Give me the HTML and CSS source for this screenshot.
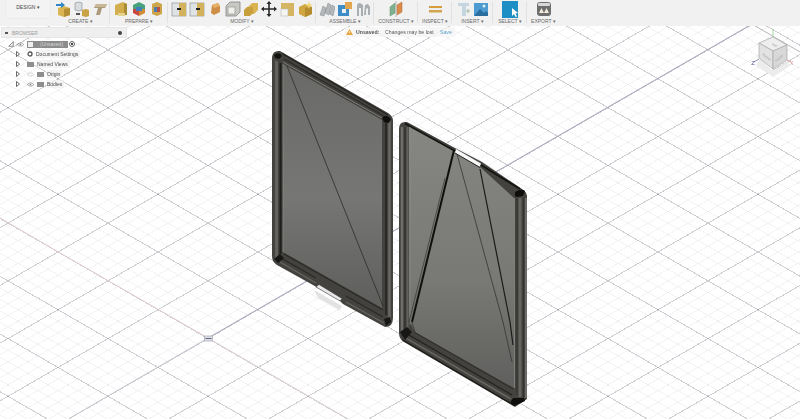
FILE: index.html
```html
<!DOCTYPE html>
<html lang="en">
<head>
<meta charset="utf-8">
<title>Fusion 360 - Design</title>
<link rel="stylesheet" href="styles.css">
</head>
<body>
<div class="app">
  <div class="grid grid-a"></div>
  <div class="grid grid-b"></div>
  <svg class="canvas" width="800" height="419" viewBox="0 0 800 419">
    <defs>
      <linearGradient id="faceL" x1="0" y1="0" x2="0" y2="1">
        <stop offset="0" stop-color="#696967"/><stop offset=".55" stop-color="#767674"/><stop offset="1" stop-color="#5e5e5c"/>
      </linearGradient>
      <linearGradient id="faceR" x1="0" y1="0" x2="0" y2="1">
        <stop offset="0" stop-color="#868683"/><stop offset=".6" stop-color="#787875"/><stop offset="1" stop-color="#5f5f5d"/>
      </linearGradient>
    </defs>
    <path d="M208 338L55 250L-10 212" stroke="#e3cfcf" stroke-width="1" fill="none"/>
    <path d="M208 338L752 24" stroke="#a9a9bd" stroke-width="1" fill="none"/>
    <path d="M752 24L800 52" stroke="#b5b5bb" stroke-width="1" fill="none"/>
    <path d="M208 338L350 420" stroke="#e0d4d6" stroke-width="1" fill="none"/>
    <path d="M208 338L70 418" stroke="#c9c9d2" stroke-width="1" fill="none"/>
    <rect x="204.500" y="336" width="8" height="5" fill="#dedee6" stroke="#a8a8b4" stroke-width=".7"/>
    <path d="M205.500 338.500H211.500" stroke="#666a80" stroke-width="1"/>

    <!-- shadow under the left panel notch -->
    <path d="M314 290L342 306L340 310L318 298Z" fill="#e2e2e2"/>

    <!-- left panel -->
    <path d="M272 57Q273 50 280 51L388 113Q393 116 393 121V318Q393 327 385 327L343 304L338 299L318 288L313 285L277 265Q272 262 272 256Z" fill="#43423e"/>
    <path d="M283 64L382 120V308L283 252Z" fill="url(#faceL)"/>
    <path d="M275 60V258L278 256V62Z" fill="#62615d"/>
    <path d="M283 64V252" stroke="#8f8f8b" stroke-width=".6"/>
    <path d="M280.500 63V254" stroke="#1d1d1b" stroke-width="2"/>
    <path d="M386 122V315" stroke="#232321" stroke-width="1.600"/>
    <path d="M389.500 121V320" stroke="#6a6965" stroke-width="2.500"/>
    <path d="M283 62L382 118" stroke="#7d7c78" stroke-width="1"/>
    <path d="M284 59L384 116" stroke="#2b2a27" stroke-width="1.200"/>
    <path d="M282 53.500L388 115" stroke="#232220" stroke-width="1.200"/>
    <path d="M284 254L383 310" stroke="#2a2926" stroke-width="1.100"/>
    <path d="M281 258L316 278M346 296L383 317" stroke="#2a2926" stroke-width="1.100"/>
    <path d="M280 262L316 283M346 302L384 323" stroke="#66655f" stroke-width="1.300"/>
    <path d="M274 55Q279 51 282 56L279 59L275 58Z" fill="#111110"/>
    <path d="M382 118Q386 113 391 119L389 123L384 122Z" fill="#0f0f0e"/>
    <path d="M274 259L280 254L284 258L278 263Z" fill="#171716"/>
    <path d="M384 319L390 317L391 322L386 326Z" fill="#171716"/>
    <path d="M287 66L383 306" stroke="#2c2c2a" stroke-width=".8" fill="none"/>
    <path d="M316 287L319 284.500L342 298.500L340 301Z" fill="#e8e8e8" stroke="#3a3a38" stroke-width=".6"/>

    <!-- right panel -->
    <path d="M399 129Q399 121 407 122L455 148L482 162L522 189Q527 192 527 197V399L515 407L404 342Q399 339 399 333Z" fill="#43423e"/>
    <path d="M409 125L455 151L480 167L514 198V388L415 332L409 320Z" fill="url(#faceR)"/>
    <path d="M456 149L481 163.500L479.500 167L455 153Z" fill="#f7f7f7"/>
    <path d="M455 153L480 167.500" stroke="#232220" stroke-width="1"/>
    <path d="M405 123.500L455 151M481 165L520 189" stroke="#141412" stroke-width="1.800"/>
    <path d="M402 127V333" stroke="#6f6e6a" stroke-width="2.500"/>
    <path d="M405 127V332" stroke="#2e2e2b" stroke-width="1.100"/>
    <path d="M407.500 127V328" stroke="#62615d" stroke-width="2"/>
    <path d="M410 127V325" stroke="#8e8e89" stroke-width=".6"/>
    <path d="M514.500 198V388" stroke="#9a9a94" stroke-width=".7"/>
    <path d="M517 198V395" stroke="#333230" stroke-width="1"/>
    <path d="M520 198V397" stroke="#65645f" stroke-width="3"/>
    <path d="M523.500 198V400" stroke="#333230" stroke-width="1"/>
    <path d="M526 198V398" stroke="#73726d" stroke-width="1.800"/>
    <path d="M515 192Q521 188 525 191L523 196L517 197L515 196Z" fill="#0e0e0d"/>
    <path d="M414 332L513 389" stroke="#2c2b27" stroke-width="1"/>
    <path d="M409 335L512 395" stroke="#22211e" stroke-width="1.200"/>
    <path d="M406 338L511 399" stroke="#6b6a65" stroke-width="1.400"/>
    <path d="M402 339.500L510 403" stroke="#1c1b19" stroke-width="1.300"/>
    <path d="M400 332L407 327L412 332L405 340Z" fill="#171716"/>
    <path d="M513 398L524 398L525 401L514 406L510 403Z" fill="#0f0f0e"/>
    <path d="M454 150L412 322" stroke="#0f0f0e" stroke-width="2"/>
    <path d="M445 178L409 322" stroke="#333331" stroke-width=".7"/>
    <path d="M412 322L415 332" stroke="#333331" stroke-width=".7"/>
    <path d="M457 154L503 322L512 362" stroke="#353533" stroke-width=".8" fill="none"/>
    <path d="M480 169L510 322L513 345" stroke="#1a1a19" stroke-width="1.200" fill="none"/>

    <!-- view cube -->
    <path d="M760 59L773 71L788 61L790 66L773 77L756 65Z" fill="#ececec"/>
    <path d="M773 37V29" stroke="#a7d6a7" stroke-width="1"/>
    <path d="M759 59L754 62" stroke="#8d8db8" stroke-width="1"/>
    <path d="M787 60L791 62" stroke="#e2a3a3" stroke-width="1"/>
    <path d="M773 37L787 45L773 51L759 43Z" fill="#eeeeee" stroke="#a8a8a8" stroke-width=".7"/>
    <path d="M759 43L773 51V69L759 58Z" fill="#e2e2e2" stroke="#a8a8a8" stroke-width=".7"/>
    <path d="M787 45L773 51V69L787 60Z" fill="#d8d8d8" stroke="#a8a8a8" stroke-width=".7"/>
    <text x="774" y="46" class="cube-t" transform="rotate(25 774 46)">TOP</text>
    <text x="766" y="58" class="cube-t" transform="rotate(38 766 58)">FRONT</text>
    <text x="780" y="59" class="cube-t" transform="rotate(-38 780 59)">RIGHT</text>
    <text x="755" y="65" class="axis-z">Z</text>
    <text x="790" y="65" class="axis-x">X</text>
  </svg>

  <header class="toolbar">
    <button class="design">DESIGN ▾</button>
    <div class="grp g-create">
      <div class="icons">
        <svg class="ic" viewBox="0 0 16 16"><path d="M3 7L9 5L15 7V14L9 16L3 14Z" fill="#d9b554"/><path d="M9 8V16L15 14V7Z" fill="#b48f35"/><path d="M1 3H6V1L10 4L6 7V5H1Z" fill="#2f86c4"/></svg>
        <svg class="ic" viewBox="0 0 16 16"><path d="M2 2Q6 0 9 2V9Q6 11 2 9Z" fill="#d8dcdf" stroke="#8f979b" stroke-width=".7"/><path d="M9 9L13 8L16 9V15L13 16L9 15Z" fill="#c9a345"/><path d="M3 12H7V14H3Z" fill="#555"/></svg>
        <svg class="ic" viewBox="0 0 16 16"><path d="M5 3H16L14 7H11L9 14H5L7 7H3Z" fill="#ab9a7b"/><path d="M5 3H16L14 6H4Z" fill="#c8b896"/></svg>
      </div>
      <span class="lbl">CREATE ▾</span>
    </div>
    <div class="grp g-prep">
      <div class="icons">
        <svg class="ic" viewBox="0 0 16 16"><path d="M2 4L10 1L14 3V14H2Z" fill="#d2ae4c"/><path d="M11 2L14 3V14H11Z" fill="#a98a35"/><path d="M5 12H12V15H5Z" fill="#e6d28f"/></svg>
        <svg class="ic" viewBox="0 0 16 16"><path d="M2 4L8 1L14 4V8H2Z" fill="#4aa27d"/><path d="M2 8H8V15L2 12Z" fill="#c9473f"/><path d="M8 8H14V12L8 15Z" fill="#d38a35"/><path d="M5 6H11V10H5Z" fill="#3d80bd"/></svg>
        <svg class="ic" viewBox="0 0 16 16"><path d="M3 3L8 1L13 3V13L8 15L3 13Z" fill="#cda64a"/><path d="M5 6H11V11H5Z" fill="#b9534a"/><path d="M5 6H8V11H5Z" fill="#4a7fb0"/></svg>
      </div>
      <span class="lbl">PREPARE ▾</span>
    </div>
    <div class="grp g-mod">
      <div class="icons">
        <svg class="ic" viewBox="0 0 16 16"><rect x="1" y="2" width="14" height="13" fill="#dfe3e6" stroke="#8e9498" stroke-width=".7"/><rect x="8" y="2" width="7" height="13" fill="#d2b25c"/><rect x="6" y="7" width="4" height="2" fill="#222"/></svg>
        <svg class="ic" viewBox="0 0 16 16"><rect x="1" y="2" width="14" height="13" fill="#dfe3e6" stroke="#8e9498" stroke-width=".7"/><rect x="8" y="2" width="7" height="13" fill="#d2b25c"/><rect x="7" y="7" width="4" height="2" fill="#222"/></svg>
        <svg class="ic" viewBox="0 0 16 16"><path d="M5 4L11 2L13 5V11L7 14L4 12Z" fill="#cf8e45"/><path d="M5 4L11 2L13 5L7 7Z" fill="#e6b268"/></svg>
        <svg class="ic" viewBox="0 0 16 16"><path d="M1 5L5 1H15V11L11 15H1Z" fill="#c8c8c4" stroke="#777" stroke-width=".7"/><rect x="3" y="6" width="7" height="7" fill="#f0f0ec" stroke="#8a8a86" stroke-width=".6"/></svg>
        <svg class="ic" viewBox="0 0 16 16"><path d="M5 6L9 2H15V9L11 13H5Z" fill="#d9b450"/><path d="M1 9L4 6H10V12L7 15H1Z" fill="#c79f3d"/></svg>
        <svg class="ic" viewBox="0 0 16 16"><path d="M8 1V15M1 8H15" stroke="#2a2a2a" stroke-width="1.600"/><path d="M8 0L5.500 3H10.500ZM8 16L5.500 13H10.500ZM0 8L3 5.500V10.500ZM16 8L13 5.500V10.500Z" fill="#2a2a2a"/></svg>
        <svg class="ic" viewBox="0 0 16 16"><rect x="2" y="2" width="13" height="13" fill="#d6b562"/><rect x="2" y="8" width="7" height="7" fill="#f5f5f2" stroke="#b9b9b5" stroke-width=".6"/></svg>
        <svg class="ic" viewBox="0 0 16 16"><path d="M2 6L8 3L15 6V13L8 16L2 13Z" fill="#cfa640"/><path d="M8 7V16L15 13V6Z" fill="#b58d30"/><path d="M12 0L13 3L16 4L13 5L12 8L11 5L8 4L11 3Z" fill="#f1d77a"/></svg>
      </div>
      <span class="lbl">MODIFY ▾</span>
    </div>
    <div class="grp g-asm">
      <div class="icons">
        <svg class="ic" viewBox="0 0 16 16"><path d="M1 14L4 5L7 7L5 15ZM6 12L9 2L12 4L10 14ZM11 13L13 4L16 6L14 15Z" fill="#b4b8ba" stroke="#7e8487" stroke-width=".5"/></svg>
        <svg class="ic" viewBox="0 0 16 16"><rect x="1" y="4" width="11" height="11" fill="#3f8dc7"/><rect x="8" y="1" width="7" height="7" fill="#e0a750"/><rect x="5" y="8" width="4" height="4" fill="#eaf2f7"/></svg>
        <svg class="ic" viewBox="0 0 16 16"><path d="M2 15V5Q2 2 5 2L8 4V15H6V7H4V15ZM9 14L10 4L13 3L15 6V14H13V7L11 8V14Z" fill="#a9aeb0"/></svg>
      </div>
      <span class="lbl">ASSEMBLE ▾</span>
    </div>
    <div class="grp g-con">
      <div class="icons">
        <svg class="ic" viewBox="0 0 16 16"><path d="M2 6L7 2V12L2 15Z" fill="#7fb28e" stroke="#5f8f6f" stroke-width=".5"/><path d="M9 4L14 1V11L9 14Z" fill="#d98b4a" stroke="#b66e33" stroke-width=".5"/><path d="M8 0V16" stroke="#999" stroke-width=".6"/></svg>
      </div>
      <span class="lbl">CONSTRUCT ▾</span>
    </div>
    <div class="grp g-ins">
      <div class="icons">
        <svg class="ic" viewBox="0 0 16 16"><rect x="2" y="5" width="13" height="2" fill="#d79c3e"/><rect x="2" y="7" width="13" height="2" fill="#eee"/><rect x="2" y="9" width="13" height="2.500" fill="#d2a650"/></svg>
      </div>
      <span class="lbl">INSPECT ▾</span>
    </div>
    <div class="grp g-insert">
      <div class="icons">
        <svg class="ic-s" viewBox="0 0 14 16"><path d="M1 2H12V5H9V15H5V5H1Z" fill="#c5d6e0"/><path d="M9 10H13M11 8V12" stroke="#a9c0a8" stroke-width="1.200"/></svg>
        <svg class="ic" viewBox="0 0 16 16"><rect x="1" y="2" width="14" height="13" fill="#4d9bd0"/><path d="M1 15L7 8L11 12L13 10L15 12V15Z" fill="#2a6d9f"/><circle cx="11" cy="5" r="1.500" fill="#d9edf8"/></svg>
      </div>
      <span class="lbl">INSERT ▾</span>
    </div>
    <div class="grp g-sel">
      <div class="icons">
        <svg class="ic-l" viewBox="0 0 16 17"><rect width="16" height="17" fill="#1d8fc4"/><path d="M10 7V15L12 13L13.500 16L15 15.500L13.500 12.500L16 12Z" fill="#fff"/></svg>
      </div>
      <span class="lbl">SELECT ▾</span>
    </div>
    <div class="grp g-exp">
      <div class="icons">
        <svg class="ic" viewBox="0 0 16 16"><rect x="1" y="1" width="14" height="14" rx="3" fill="#6e6e6e"/><rect x="2" y="2" width="12" height="3" rx="1" fill="#d8d8d8"/><path d="M3 12L5.500 7L8 12ZM8 12L10.500 7L13 12Z" fill="#f3eadb"/></svg>
      </div>
      <span class="lbl">EXPORT ▾</span>
    </div>
  </header>

  <aside class="browser">
    <div class="br-head"><span class="br-left"><i class="br-mark"></i>BROWSER</span><i class="br-dot"></i></div>
    <ul class="tree">
      <li class="row">
        <svg class="tw" viewBox="0 0 8 8"><path d="M1 7H7V1Z" fill="none" stroke="#555" stroke-width=".9"/></svg>
        <svg class="eye" viewBox="0 0 8 6"><path d="M0 3Q4 -1 8 3Q4 7 0 3Z" fill="none" stroke="#777" stroke-width=".7"/><circle cx="4" cy="3" r="1" fill="#777"/></svg>
        <span class="current"><i class="doc"></i><b>(Unsaved)</b></span>
        <i class="target"></i>
      </li>
      <li class="row sub"><svg class="tri" viewBox="0 0 4 6"><path d="M.5 .5L3.500 3L.5 5.500Z" fill="#fff" stroke="#444" stroke-width=".8"/></svg><svg class="gear" viewBox="0 0 6 6"><circle cx="3" cy="3" r="2" fill="none" stroke="#555" stroke-width="1.300"/></svg><span>Document Settings</span></li>
      <li class="row sub"><svg class="tri" viewBox="0 0 4 6"><path d="M.5 .5L3.500 3L.5 5.500Z" fill="#fff" stroke="#444" stroke-width=".8"/></svg><i class="folder"></i><span>Named Views</span></li>
      <li class="row sub"><svg class="tri" viewBox="0 0 4 6"><path d="M.5 .5L3.500 3L.5 5.500Z" fill="#fff" stroke="#444" stroke-width=".8"/></svg><svg class="eye pale" viewBox="0 0 8 6"><path d="M0 3Q4 -1 8 3Q4 7 0 3Z" fill="none" stroke="#aaa" stroke-width=".7"/></svg><i class="folder"></i><span>Origin</span></li>
      <li class="row sub"><svg class="tri" viewBox="0 0 4 6"><path d="M.5 .5L3.500 3L.5 5.500Z" fill="#fff" stroke="#444" stroke-width=".8"/></svg><svg class="eye" viewBox="0 0 8 6"><path d="M0 3Q4 -1 8 3Q4 7 0 3Z" fill="none" stroke="#777" stroke-width=".7"/><circle cx="4" cy="3" r="1" fill="#777"/></svg><i class="folder"></i><span>Bodies</span></li>
    </ul>
  </aside>

  <div class="unsaved">
    <svg class="warn" viewBox="0 0 8 7"><path d="M4 0L8 7H0Z" fill="#e8a33a"/><path d="M4 2.500V5" stroke="#fff" stroke-width=".8"/></svg>
    <b>Unsaved:</b>
    <span class="msg">Changes may be lost</span>
    <a class="save">Save</a>
  </div>
</div>
</body>
</html>
```

FILE: styles.css
```css
* { box-sizing: border-box; }
html, body { margin: 0; height: 100%; overflow: hidden; background: #fff; }
body { font-family: "Liberation Sans", Arial, sans-serif; }

.app {
  position: relative;
  width: 800px;
  height: 419px;
  overflow: hidden;
  background: #fff;
  filter: blur(0.4px);
}

/* The ground grid: two sets of lines, rotated about the model origin at (208, 338). */
.grid {
  position: absolute;
  left: -792px;
  top: -662.5px;
  width: 2000px;
  height: 2000px;
  background-image:
    repeating-linear-gradient(to bottom, #cfcfd3 0 1px, transparent 1px 50px),
    repeating-linear-gradient(to bottom, #f4f4f6 0 1px, transparent 1px 10px);
}
.grid-a { transform: rotate(30deg); }
.grid-b { transform: rotate(-30deg); mix-blend-mode: multiply; }

.canvas { position: absolute; inset: 0; display: block; }
.cube-t { font: 3px "Liberation Sans", sans-serif; fill: #9a9a9a; text-anchor: middle; }
.axis-z { font: 6px "Liberation Sans", sans-serif; fill: #5a5a96; text-anchor: end; }
.axis-x { font: 5px "Liberation Sans", sans-serif; fill: #d98a8a; }

.toolbar {
  position: relative;
  display: flex;
  height: 26px;
  padding-left: 5px;
  background: #f1f1f1;
}
.design {
  width: 46px;
  height: 19px;
  margin: 0;
  padding: 0 0 5px;
  border: 0;
  border-right: 1px solid #ebebeb;
  border-bottom: 1px solid #ebebeb;
  border-left: 1px solid #ebebeb;
  border-radius: 0 0 2px 2px;
  background: #f3f3f3;
  color: #444;
  font: 5px "Liberation Sans", sans-serif;
}
.grp {
  display: flex;
  flex-direction: column;
  align-items: center;
  position: relative;
}
.grp::after {
  content: "";
  position: absolute;
  top: 2px;
  right: 0;
  bottom: 3px;
  width: 1px;
  background: #e1e1e1;
}
.g-exp::after { display: none; }
.g-create { width: 59px; }
.g-prep { width: 58px; }
.g-mod { width: 148px; }
.g-asm { width: 58px; }
.g-con { width: 44px; }
.g-ins { width: 34px; }
.g-insert { width: 41px; }
.g-sel { width: 34px; }
.g-exp { width: 33px; }

.icons { display: flex; gap: 2px; height: 18px; align-items: center; }
.ic { width: 16px; height: 16px; display: block; }
.ic-s { width: 14px; height: 16px; display: block; }
.ic-l { width: 16px; height: 17px; display: block; }
.lbl { margin-top: -1px; font-size: 5px; line-height: 8px; color: #6a6a6a; white-space: nowrap; }

.browser { position: absolute; top: 27px; left: 1px; width: 126px; }
.br-head {
  display: flex;
  justify-content: space-between;
  align-items: center;
  height: 11px;
  padding: 0 4px 0 3px;
  background: #efefef;
  border: 1px solid #e6e6e6;
  color: #9b9b9b;
  font-size: 5px;
}
.br-left { display: flex; align-items: center; gap: 4px; }
.br-mark { width: 3px; height: 2px; background: #555; }
.br-dot { width: 4px; height: 4px; border-radius: 50%; background: #444; }

.tree { list-style: none; margin: 1px 0 0; padding: 0; }
.row {
  display: flex;
  align-items: center;
  height: 10px;
  font-size: 5px;
  color: #4b4b4b;
}
.row:first-child { padding-left: 7px; }
.tw { width: 6px; height: 6px; margin-right: 3px; }
.eye { width: 7px; height: 5px; margin-right: 3px; flex: none; }
.eye.pale { opacity: .8; }
.current {
  display: flex;
  align-items: center;
  height: 7px;
  width: 41px;
  background: #8d8d8d;
  margin-right: 1px;
}
.current b { font-weight: 400; color: #d9d9d9; margin-left: 6px; }
.doc { width: 7px; height: 7px; background: #eee; border: 1px solid #8d8d8d; }
.target { width: 6px; height: 6px; border: 1px solid #666; border-radius: 50%; background: radial-gradient(circle, #444 1px, #fff 1.2px); }
.sub { padding-left: 15px; gap: 3px; }
.sub .eye { margin-right: 0; }
.sub span { background: rgba(240, 240, 240, .7); padding: 1px 2px 1px 0; }
.tri { width: 4px; height: 6px; margin-right: 4px; flex: none; }
.gear { width: 6px; height: 6px; }
.folder { width: 7px; height: 5px; background: #8e8e8e; flex: none; }

.unsaved {
  position: absolute;
  top: 27px;
  left: 345px;
  display: flex;
  align-items: center;
  width: 110px;
  height: 10px;
  padding-left: 1px;
  background: rgba(245, 245, 245, .8);
  font-size: 5.2px;
  color: #555;
}
.warn { width: 7px; height: 6px; margin-right: 3px; }
.unsaved b { width: 29px; color: #555; }
.msg { width: 55px; }
.save { color: #5b9cc9; }
```
